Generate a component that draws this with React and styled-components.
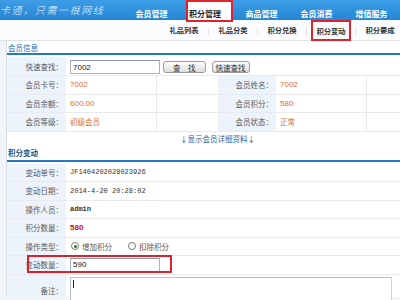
import React from "react";
import styled, { createGlobalStyle, css } from "styled-components";

const GlobalStyle = createGlobalStyle`
  html, body { margin: 0; padding: 0; }
  body {
    width: 400px;
    height: 300px;
    overflow: hidden;
    background: #f1f4f8;
    font-family: "Liberation Sans", "Noto Sans CJK SC", sans-serif;
    font-size: 7.5px;
    color: #555;
  }
`;

const cjk = `"Noto Sans CJK SC", "Liberation Sans", sans-serif`;

const Header = styled.div`
  height: 20px;
  display: flex;
  align-items: flex-start;
  background: linear-gradient(#3d9de6, #2586d5);
  position: relative;
  z-index: 1;
`;

const Logo = styled.div`
  width: 124px;
  padding: 4px 0 0 0;
  color: #eaf4ff;
  font-family: ${cjk};
  font-style: italic;
  font-weight: 300;
  font-size: 10px;
  line-height: 11px;
  letter-spacing: 1.6px;
  white-space: nowrap;
`;

const Nav = styled.div`
  display: flex;
`;

const NavItem = styled.div`
  width: 55px;
  height: 20px;
  box-sizing: border-box;
  padding-top: 9px;
  text-align: center;
  font-family: ${cjk};
  font-weight: bold;
  font-size: 8px;
  line-height: 9px;
  color: #fff;
  white-space: nowrap;
  ${(p) =>
    p.$active &&
    css`
      width: 47px;
      height: 22px;
      margin: 0 1px 0 7px;
      padding: 7px 0 0 1px;
      text-align: left;
      background: #fff;
      color: #1d1d1d;
      border: 2px solid #e1242c;
    `}
`;

const SubNav = styled.div`
  height: 20px;
  display: flex;
  justify-content: flex-end;
  background: #fbfcfe;
  border-bottom: 1px solid #dde3ea;
`;

const SubItem = styled.div`
  width: 40px;
  box-sizing: border-box;
  display: flex;
  align-items: center;
  justify-content: center;
  font-family: ${cjk};
  font-weight: bold;
  font-size: 7.3px;
  color: #333;
  ${(p) =>
    p.$active &&
    css`
      border: 2px solid #e1242c;
      height: 21px;
    `}
`;

const Sep = styled.div`
  width: 9px;
  display: flex;
  align-items: center;
  justify-content: center;
  color: #c9ced6;
  font-size: 7px;
`;

const Content = styled.div`
  margin-left: 6px;
  background: #fff;
  border-left: 1px solid #d7dee7;
`;

const SectionTitle = styled.div`
  height: ${(p) => p.$h}px;
  box-sizing: border-box;
  display: flex;
  align-items: center;
  padding-left: 1px;
  font-family: ${cjk};
  font-size: 7.5px;
  font-weight: ${(p) => (p.$bold ? "bold" : "normal")};
  color: ${(p) => (p.$bold ? "#1f4f82" : "#2b6db4")};
  border-bottom: 2px solid #1f7cc3;
  margin-bottom: 2px;
`;

const InfoGrid = styled.div`
  display: grid;
  grid-template-columns: 59px 91px 61px 58px 91px 1fr;
`;

const Cell = styled.div`
  height: ${(p) => p.$h || 18.5}px;
  box-sizing: border-box;
  border-bottom: 1px solid #e7ebf0;
  display: flex;
  align-items: center;
  ${(p) => p.$span && css`grid-column: span ${p.$span};`}
`;

const Label = styled(Cell)`
  justify-content: flex-end;
  padding-right: 3px;
  background: #edf3fa;
  font-family: ${cjk};
  color: #5a5a5a;
  white-space: nowrap;
`;

const Value = styled(Cell)`
  padding-left: 4px;
  border-right: 1px solid #e7ebf0;
  color: #de6f2c;
  font-size: 8px;
  font-family: ${(p) => (p.$cjk ? cjk : `"Liberation Sans", sans-serif`)};
  ${(p) => p.$cjk && css`font-size: 7.5px;`}
`;

const Blank = styled(Cell)``;

const Input = styled.div`
  width: 90px;
  height: 14px;
  box-sizing: border-box;
  border: 1px solid #a9b3bf;
  border-top-color: #8c96a3;
  background: #fff;
  padding-left: 2px;
  display: flex;
  align-items: center;
  font-size: 8px;
  color: #222;
`;

const Button = styled.div`
  height: 12px;
  box-sizing: border-box;
  padding: 0 ${(p) => p.$pad}px;
  margin-left: ${(p) => p.$ml}px;
  border: 1px solid #9a9a9a;
  border-radius: 3px;
  background: linear-gradient(#ffffff, #dcdcdc);
  display: flex;
  align-items: center;
  font-family: ${cjk};
  font-size: 7.5px;
  color: #333;
  white-space: pre;
`;

const QuickRow = styled(Cell)`
  padding-left: 4px;
  padding-top: 2px;
`;

const DetailLink = styled(Cell)`
  justify-content: center;
  padding-left: 28px;
  color: #2a64a6;
  font-family: ${cjk};
  border-bottom: none;
`;

const FormGrid = styled.div`
  display: grid;
  grid-template-columns: 59px 1fr;
`;

const FormValue = styled(Cell)`
  padding-left: 4px;
  color: #333;
  font-family: ${(p) => (p.$mono ? `"Liberation Mono", monospace` : `"Liberation Sans", sans-serif`)};
  font-size: ${(p) => (p.$mono ? 7 : 8)}px;
  ${(p) => p.$bold && css`font-weight: bold;`}
  ${(p) => p.$red && css`color: #cc1111;`}
  position: relative;
`;

const Radio = styled.span`
  width: 6px;
  height: 6px;
  border: 1px solid #777;
  border-radius: 50%;
  display: inline-flex;
  align-items: center;
  justify-content: center;
  margin-left: ${(p) => p.$ml}px;
  margin-right: 3px;
  background: #fff;
  &::after {
    content: "";
    width: 3px;
    height: 3px;
    border-radius: 50%;
    background: ${(p) => (p.$on ? "#2c6b2c" : "transparent")};
  }
`;

const RadioText = styled.span`
  font-family: ${cjk};
  font-size: 7.5px;
  color: #555;
`;

const Highlight = styled.div`
  position: absolute;
  left: -39px;
  top: -1px;
  width: 145px;
  height: 18px;
  box-sizing: border-box;
  border: 2px solid #d9232b;
  pointer-events: none;
`;

const NoteLabel = styled(Label)`
  align-items: flex-start;
  padding-top: 10px;
  border-bottom: none;
`;

const NoteCell = styled(Cell)`
  align-items: flex-start;
  padding: 2px 8px 0 4px;
  border-bottom: none;
`;

const TextArea = styled.div`
  width: 100%;
  height: 30px;
  border: 1px solid #b9c1cb;
  border-right-color: #d0d6dd;
  background: #fff;
  padding: 2px;
  box-sizing: border-box;
  &::before {
    content: "";
    display: block;
    width: 1px;
    height: 8px;
    background: #222;
  }
`;

const formRows = [
  { label: "变动单号：", value: "JF1404202028023926", mono: true },
  { label: "变动日期：", value: "2014-4-20 20:28:02", mono: true },
  { label: "操作人员：", value: "admin", mono: true, bold: true },
  { label: "积分数量：", value: "580", bold: true, red: true },
];

export default function App() {
  return (
    <>
      <GlobalStyle />
      <Header>
        <Logo>卡通，只需一根网线</Logo>
        <Nav>
          <NavItem>会员管理</NavItem>
          <NavItem $active>积分管理</NavItem>
          <NavItem>商品管理</NavItem>
          <NavItem>会员消费</NavItem>
          <NavItem>增值服务</NavItem>
        </Nav>
      </Header>
      <SubNav>
        <SubItem>礼品列表</SubItem>
        <Sep>|</Sep>
        <SubItem>礼品分类</SubItem>
        <Sep>|</Sep>
        <SubItem>积分兑换</SubItem>
        <Sep>|</Sep>
        <SubItem $active>积分变动</SubItem>
        <Sep>|</Sep>
        <SubItem>积分要成</SubItem>
      </SubNav>
      <Content>
        <SectionTitle $h={14}>会员信息</SectionTitle>
        <InfoGrid>
          <Label $h={19}>快速查找：</Label>
          <QuickRow $h={19} $span={5}>
            <Input>7002</Input>
            <Button $pad={9} $ml={3}>查　找</Button>
            <Button $pad={3} $ml={6}>快速查找</Button>
          </QuickRow>

          <Label>会员卡号：</Label>
          <Value>7002</Value>
          <Blank />
          <Label>会员姓名：</Label>
          <Value>7002</Value>
          <Blank />

          <Label>会员余额：</Label>
          <Value>600.00</Value>
          <Blank />
          <Label>会员积分：</Label>
          <Value>580</Value>
          <Blank />

          <Label>会员等级：</Label>
          <Value $cjk>初级会员</Value>
          <Blank />
          <Label>会员状态：</Label>
          <Value $cjk>正常</Value>
          <Blank />

          <DetailLink $h={14} $span={6}>↓显示会员详细资料↓</DetailLink>
        </InfoGrid>

        <SectionTitle $h={16} $bold>积分变动</SectionTitle>
        <FormGrid>
          {formRows.map((r) => (
            <React.Fragment key={r.label}>
              <Label>{r.label}</Label>
              <FormValue $mono={r.mono} $bold={r.bold} $red={r.red}>
                {r.value}
              </FormValue>
            </React.Fragment>
          ))}

          <Label>操作类型：</Label>
          <FormValue>
            <Radio $on $ml={1} />
            <RadioText>增加积分</RadioText>
            <Radio $ml={16} />
            <RadioText>扣除积分</RadioText>
          </FormValue>

          <Label>变动数量：</Label>
          <FormValue>
            <Input>590</Input>
            <Highlight />
          </FormValue>

          <NoteLabel $h={22}>备注：</NoteLabel>
          <NoteCell $h={22}>
            <TextArea />
          </NoteCell>
        </FormGrid>
      </Content>
    </>
  );
}
